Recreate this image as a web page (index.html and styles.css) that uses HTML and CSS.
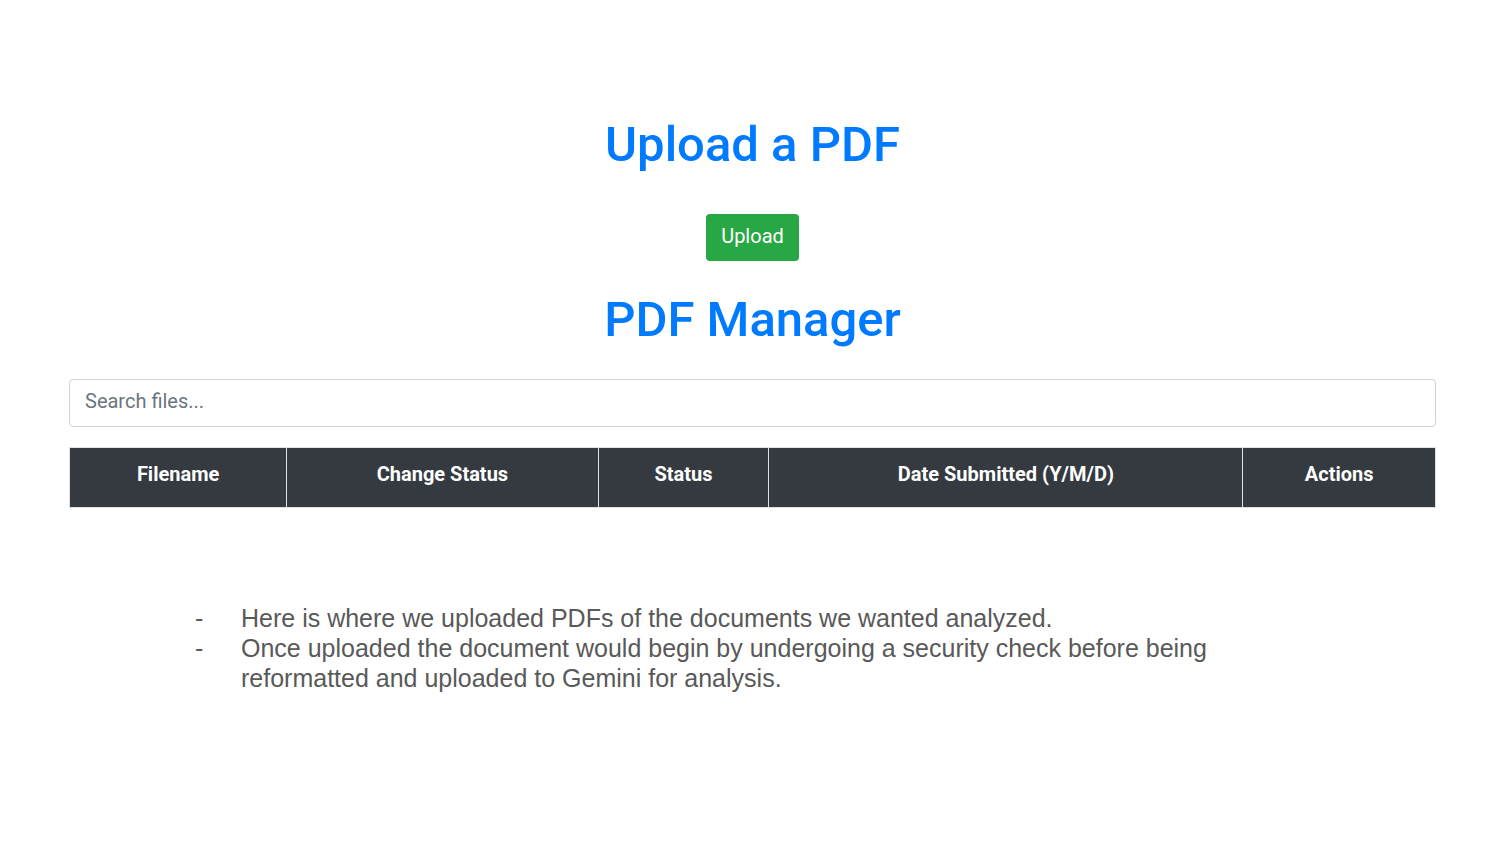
FILE: index.html
```
<!DOCTYPE html>
<html lang="en">
<head>
<meta charset="utf-8">
<meta name="viewport" content="width=device-width, initial-scale=1">
<title>PDF Manager</title>
<link rel="stylesheet" href="styles.css">
</head>
<body>
<main class="page">
  <section class="upload">
    <h1 class="heading">Upload a PDF</h1>
    <button class="upload-button" type="button">Upload</button>
  </section>
  <section class="manager">
    <h1 class="heading">PDF Manager</h1>
    <input class="search" type="text" placeholder="Search files..." aria-label="Search files">
    <table class="files">
      <colgroup>
        <col class="col-name">
        <col class="col-change">
        <col class="col-status">
        <col class="col-date">
        <col class="col-actions">
      </colgroup>
      <thead>
        <tr>
          <th scope="col">Filename</th>
          <th scope="col">Change Status</th>
          <th scope="col">Status</th>
          <th scope="col">Date Submitted (Y/M/D)</th>
          <th scope="col">Actions</th>
        </tr>
      </thead>
    </table>
  </section>
  <ul class="notes">
    <li>Here is where we uploaded PDFs of the documents we wanted analyzed.</li>
    <li>Once uploaded the document would begin by undergoing a security check before being reformatted and uploaded to Gemini for analysis.</li>
  </ul>
</main>
</body>
</html>
```
FILE: styles.css
```
* {
  box-sizing: border-box;
}

body {
  margin: 0;
  background: #fff;
  font-family: Roboto, "Liberation Sans", sans-serif;
}

.page {
  padding: 115px 64px 0 69px;
}

.upload,
.manager {
  display: flex;
  flex-direction: column;
  align-items: center;
}

.heading {
  margin: 0;
  color: #007bff;
  font-size: 49px;
  font-weight: 500;
  line-height: 60px;
}

.upload-button {
  margin: 39px 0 29px;
  padding: 8px 15px 10px;
  border: 0;
  border-radius: 4px;
  background: #28a745;
  color: #fff;
  font: 400 20px/29px Roboto, sans-serif;
}

.search {
  width: 100%;
  height: 48px;
  margin: 29px 0 20px;
  padding: 0 15px 4px;
  border: 1px solid #ced4da;
  border-radius: 4px;
  color: #495057;
  font: 400 20px/29px Roboto, sans-serif;
}

.search::placeholder {
  color: #6c757d;
  opacity: 1;
}

.files {
  width: 100%;
  table-layout: fixed;
  border-collapse: collapse;
}

.files th {
  height: 60px;
  padding: 0 8px 6px;
  border: 1px solid #dee2e6;
  background: #343a40;
  color: #fff;
  font-size: 20px;
  font-weight: 700;
  line-height: 29px;
  text-align: center;
}

.col-name { width: 15.9%; }
.col-change { width: 22.8%; }
.col-status { width: 12.5%; }
.col-date { width: 34.7%; }
.col-actions { width: 14.1%; }

.notes {
  max-width: 1150px;
  margin: 95px 0 0;
  padding: 0 0 0 126px;
  color: #595959;
  font: 400 25px/30px "Liberation Sans", Arial, sans-serif;
  list-style: none;
}

.notes li {
  display: flex;
}

.notes li::before {
  flex: 0 0 46px;
  content: "-";
}
```
